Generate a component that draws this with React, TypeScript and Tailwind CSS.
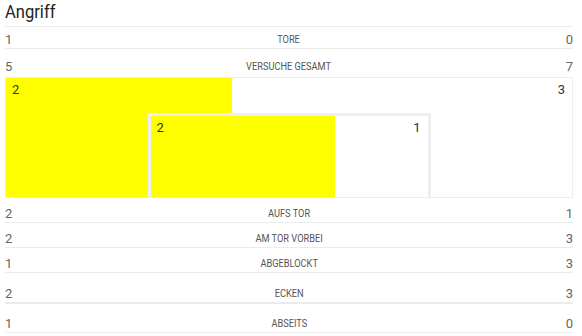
type Stat = { label: string; home: number; away: number; h: string; line?: string };

const top: Stat[] = [
  { label: "Tore", home: 1, away: 0, h: "h-[22px] pb-[1px]", line: "border-b" },
  { label: "Versuche gesamt", home: 5, away: 7, h: "h-[28px] pb-[3px]" },
];

const bottom: Stat[] = [
  { label: "Aufs Tor", home: 2, away: 1, h: "h-[25px] pb-[1px]", line: "border-b" },
  { label: "Am Tor vorbei", home: 2, away: 3, h: "h-[25px] pb-[1px]", line: "border-b" },
  { label: "Abgeblockt", home: 1, away: 3, h: "h-[25px] pb-[1px]", line: "border-b" },
  { label: "Ecken", home: 2, away: 3, h: "h-[31px] pb-[1px]", line: "border-b-2" },
  { label: "Abseits", home: 1, away: 0, h: "h-[29px] pb-[1px]", line: "border-b" },
];

function StatRow({ s }: { s: Stat }) {
  return (
    <div
      className={`grid grid-cols-[1fr_auto_1fr] items-end border-[#ebebeb] ${s.h} ${s.line ?? ""}`}
    >
      <span className="text-[13px] leading-[15px] text-[#666]">{s.home}</span>
      {/* condensed caption: Roboto squeezed horizontally */}
      <span className="inline-block scale-x-[0.84] text-[11px] leading-[15px] uppercase text-[#555]">
        {s.label}
      </span>
      <span className="text-[13px] leading-[15px] text-[#666] text-right">{s.away}</span>
    </div>
  );
}

function Values({ home, away }: { home: number; away: number }) {
  return (
    <div className="relative flex justify-between pl-[6px] pr-[7px] pt-[4px] text-[13px] leading-[16px] text-[#333]">
      <span>{home}</span>
      <span>{away}</span>
    </div>
  );
}

// shots total vs. shots on target, drawn as nested proportional boxes
function ShotBox({ home, away, onHome, onAway }: { home: number; away: number; onHome: number; onAway: number }) {
  const share = (home / (home + away)) * 100;
  const onShare = (onHome / (onHome + onAway)) * 100;
  return (
    <div className="relative flex h-[121px] flex-col border border-[#eee] bg-white">
      <div className="absolute inset-y-0 left-0 bg-[#ffff00]" style={{ width: `${share}%` }} />
      <div className="h-[35px]">
        <Values home={home} away={away} />
      </div>
      <div className="relative ml-[25%] w-[50%] flex-1 border-[3px] border-b-0 border-[#eee] bg-white">
        <div className="absolute inset-y-0 left-0 bg-[#ffff00]" style={{ width: `${onShare}%` }} />
        <Values home={onHome} away={onAway} />
      </div>
    </div>
  );
}

export default function App() {
  return (
    <div className="w-[582px] h-[336px] bg-white font-['Roboto',sans-serif] overflow-hidden">
      <div className="pl-[5px] pr-[9px]">
        <h2 className="h-[27px] border-b border-[#ebebeb] text-[18px] leading-[24px] text-[#222]">
          <span className="inline-block origin-left scale-x-[0.92]">Angriff</span>
        </h2>
        {top.map((s) => (
          <StatRow key={s.label} s={s} />
        ))}
        <ShotBox home={2} away={3} onHome={2} onAway={1} />
        {bottom.map((s) => (
          <StatRow key={s.label} s={s} />
        ))}
      </div>
    </div>
  );
}
